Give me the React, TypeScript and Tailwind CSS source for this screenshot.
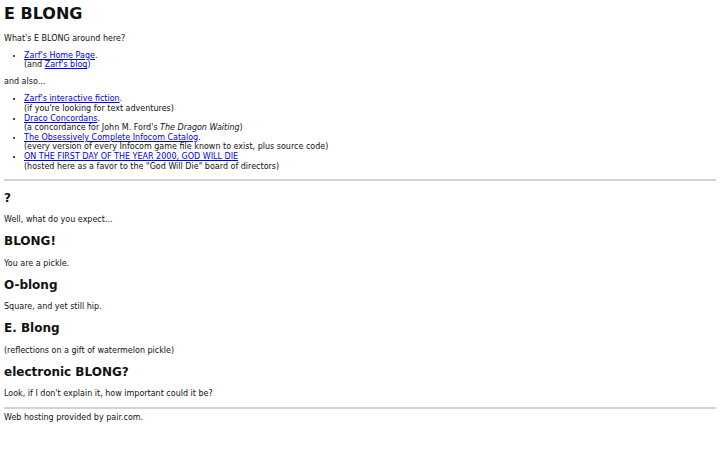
import React from "react";

const linkCls = "text-[#0000ee] underline";

function Section({ title, children }: { title: string; children: React.ReactNode }) {
  return (
    <>
      <h2 className="text-[12px] font-bold my-[9.75px] leading-[14.4px]">{title}</h2>
      <p className="my-[8px]">{children}</p>
    </>
  );
}

export default function App() {
  return (
    <div
      className="bg-white text-[#111] text-[8px] leading-[9.6px] p-[4px] min-h-[450px]"
      style={{ fontFamily: '"DejaVu Sans", sans-serif' }}
    >
      <h1 className="text-[16px] font-bold mt-0 mb-[10.5px] leading-[19px]">E BLONG</h1>

      <p className="my-[7.5px]">What's E BLONG around here?</p>

      <ul className="list-disc pl-[20px] my-[7.5px]">
        <li>
          <a href="#" className={linkCls}>Zarf's Home Page</a>.
          <br />
          (and <a href="#" className={linkCls}>Zarf's blog</a>)
        </li>
      </ul>

      <p className="my-[7.5px]">and also...</p>

      <ul className="list-disc pl-[20px] mt-[7.5px] mb-[8px]">
        <li>
          <a href="#" className={linkCls}>Zarf's interactive fiction</a>.
          <br />
          (if you're looking for text adventures)
        </li>
        <li>
          <a href="#" className={linkCls}>Draco Concordans</a>.
          <br />
          (a concordance for John M. Ford's <i>The Dragon Waiting</i>)
        </li>
        <li>
          <a href="#" className={linkCls}>The Obsessively Complete Infocom Catalog</a>.
          <br />
          (every version of every Infocom game file known to exist, plus source code)
        </li>
        <li>
          <a href="#" className={linkCls}>ON THE FIRST DAY OF THE YEAR 2000, GOD WILL DIE</a>
          <br />
          (hosted here as a favor to the "God Will Die" board of directors)
        </li>
      </ul>

      <hr className="my-[4px] border-0 h-[2px] bg-[#d2d2d2]" />

      <Section title="?">Well, what do you expect...</Section>
      <Section title="BLONG!">You are a pickle.</Section>
      <Section title="O-blong">Square, and yet still hip.</Section>
      <Section title="E. Blong">(reflections on a gift of watermelon pickle)</Section>
      <Section title="electronic BLONG?">Look, if I don't explain it, how important could it be?</Section>

      <hr className="mt-[3px] mb-[4px] border-0 h-[2px] bg-[#d2d2d2]" />

      Web hosting provided by pair.com.
    </div>
  );
}
